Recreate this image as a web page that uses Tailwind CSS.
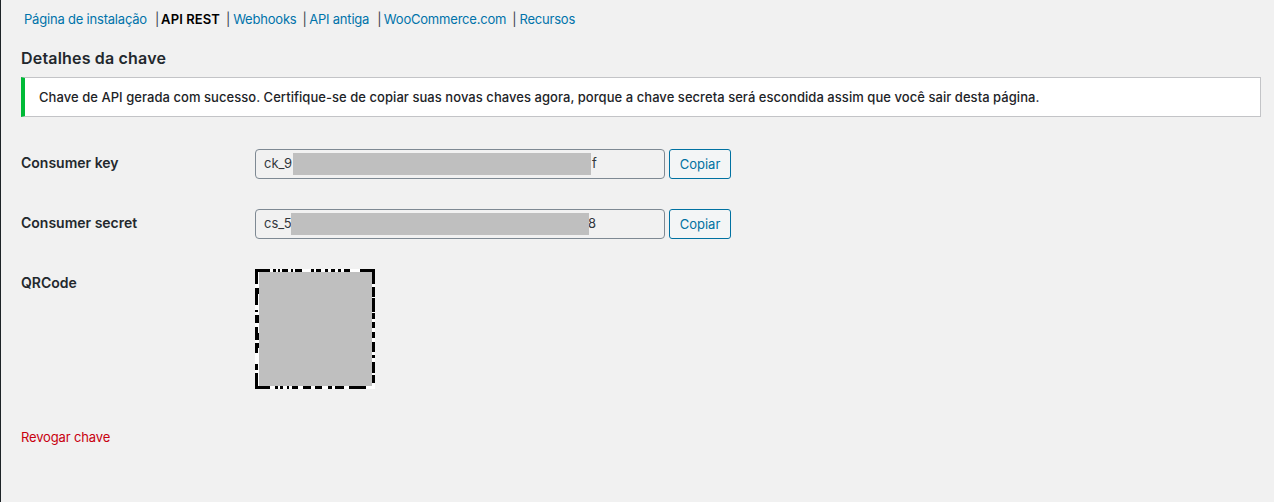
<!doctype html>
<html><head><meta charset="utf-8"><script src="https://cdn.jsdelivr.net/npm/@tailwindcss/browser@4"></script></head>
<body class="m-0">
<div class="w-[1274px] h-[502px] overflow-hidden bg-[#f1f1f1] border-l border-[#1d2327] pl-5 pr-[13px] font-['Inter',sans-serif] text-[13px] leading-[19px] text-[#2c3338]">
  <nav class="flex pt-[10px] pl-[3px] h-[48px] text-[#0073aa] tracking-[-0.2px]">
    <a>Página de instalação</a><span class="text-[#3c434a] ml-[8px] mr-[2px]">|</span><b class="font-semibold text-black tracking-[0.1px]">API REST</b><span class="text-[#3c434a] ml-[6px] mr-[3px]">|</span><a>Webhooks</a><span class="text-[#3c434a] ml-[6px] mr-[2.5px]">|</span><a>API antiga</a><span class="text-[#3c434a] ml-[8px] mr-[2.5px]">|</span><a>WooCommerce.com</a><span class="text-[#3c434a] ml-[6px] mr-[3px]">|</span><a>Recursos</a>
  </nav>
  <h2 class="text-[16px] leading-[20px] font-semibold text-[#23282d] tracking-[0.18px] m-0">Detalhes da chave</h2>
  <div class="mt-[9px] h-[40px] flex items-center bg-white border border-[#c3c4c7] border-l-4 border-l-[#00ba37] pl-[14px] font-medium text-[#1d2327] tracking-[0.05px]">Chave de API gerada com sucesso. Certifique-se de copiar suas novas chaves agora, porque a chave secreta será escondida assim que você sair desta página.</div>

  <div class="mt-[32px] flex h-[30px]">
    <div class="w-[234px] text-[14px] font-semibold text-[#23282d] pt-[4px]">Consumer key</div>
    <div class="relative w-[410px] h-[30px] border border-[#7e8993] rounded-[4px] bg-[#f1f1f1] pl-[8px] leading-[27px] text-[#32373c]">ck_9<span class="absolute left-[37px] top-[3px] w-[298px] h-[22px] bg-[#bfbfbf]"></span><span class="absolute left-[336px] top-0">f</span></div>
    <button class="ml-[4px] w-[62px] h-[30px] border border-[#0071a1] rounded-[3px] bg-[#f3f5f6] text-[#0071a1]">Copiar</button>
  </div>
  <div class="mt-[30px] flex h-[30px]">
    <div class="w-[234px] text-[14px] font-semibold text-[#23282d] pt-[4px]">Consumer secret</div>
    <div class="relative w-[410px] h-[30px] border border-[#7e8993] rounded-[4px] bg-[#f1f1f1] pl-[8px] leading-[27px] text-[#32373c]">cs_5<span class="absolute left-[332px] top-0">8</span><span class="absolute left-[35px] top-[3px] w-[298px] h-[22px] bg-[#bfbfbf]"></span></div>
    <button class="ml-[4px] w-[62px] h-[30px] border border-[#0071a1] rounded-[3px] bg-[#f3f5f6] text-[#0071a1]">Copiar</button>
  </div>
  <div class="mt-[30px] flex">
    <div class="w-[234px] text-[14px] font-semibold text-[#23282d] pt-[4px]">QRCode</div>
    <div class="relative w-[120px] h-[120px] bg-white">
      <svg width="120" height="120" viewBox="0 0 120 120" class="block" shape-rendering="crispEdges"><path fill="none" stroke="#000" stroke-width="3" d="M1.500 15V1.500H15M105 1.500H118.500V15M1.500 104V118.500H15"/><path fill="#000" d="M18 0h3v3h-3zM23 0h2v3h-2zM27 0h6v3h-6zM36 0h2v3h-2zM40 0h7v3h-7zM56 0h3v3h-3zM61 0h5v3h-5zM70 0h3v3h-3zM76 0h4v3h-4zM83 0h3v3h-3zM89 0h6v3h-6zM20 117h3v3h-3zM25 117h3v3h-3zM32 117h2v3h-2zM37 117h6v3h-6zM48 117h8v3h-8zM60 117h7v3h-7zM73 117h4v3h-4zM80 117h9v3h-9zM94 117h10v3H94zM104 117h7v3h-7zM0 19h4v6H0zM0 25h3v11H0zM0 41h3v2H0zM0 46h4v8H0zM0 58h3v6H0zM0 64h4v7H0zM0 74h4v5H0zM0 79h3v5H0zM0 95h3v6H0zM117 18h3v10h-3zM116 29h4v14h-4zM117 44h3v6h-3zM117 53h3v6h-3zM116 63h4v6h-4zM117 73h3v10h-3zM117 86h3v3h-3zM116 93h4v11h-4zM117 106h3v8h-3z"/></svg>
      <span class="absolute left-[4px] top-[3px] w-[113px] h-[114px] bg-[#bfbfbf]"></span>
    </div>
  </div>
  <a class="block mt-[38px] text-[#c8000f] tracking-[-0.15px] leading-[20px]">Revogar chave</a>
</div>
</body></html>
